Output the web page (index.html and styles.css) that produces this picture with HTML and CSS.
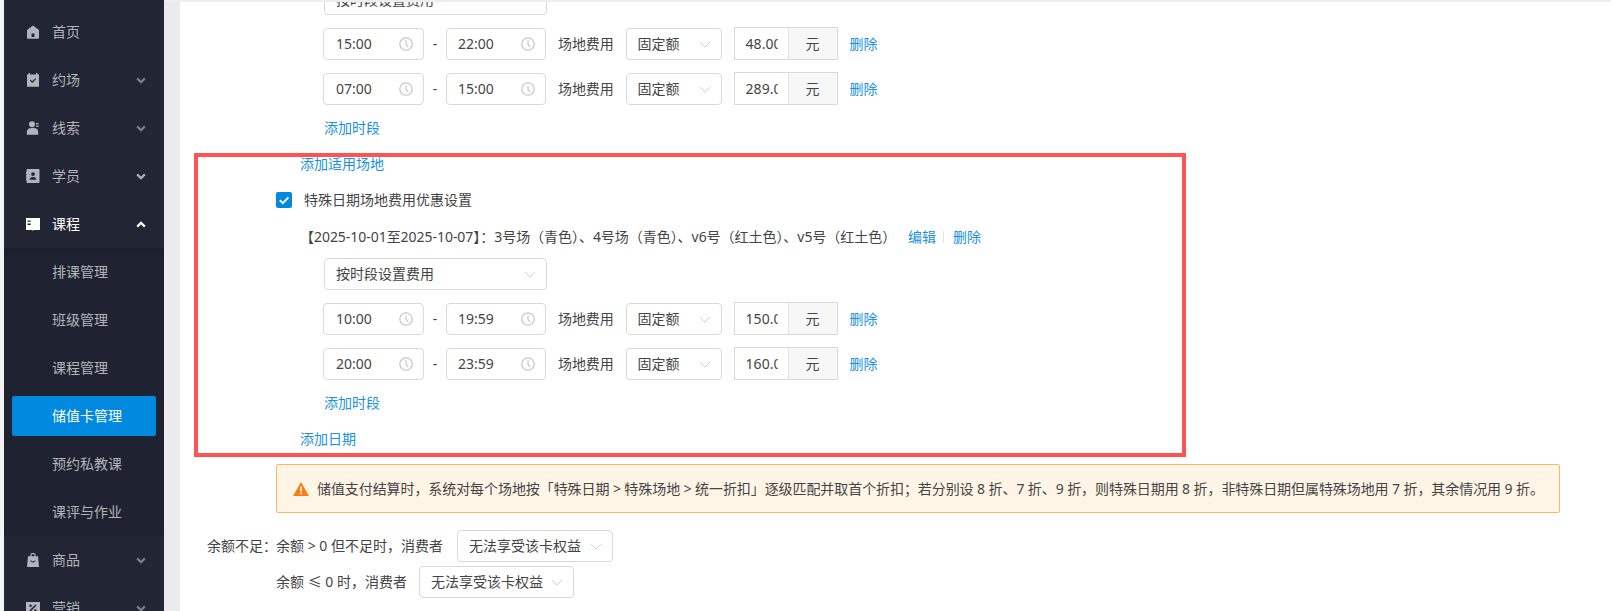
FILE: index.html
```html
<!DOCTYPE html>
<html lang="zh-CN">
<head>
<meta charset="utf-8">
<title>储值卡管理</title>
<link rel="stylesheet" href="styles.css">
</head>
<body>
<svg class="defs" width="0" height="0" aria-hidden="true">
  <defs>
    <symbol id="clock" viewBox="0 0 14 14"><circle cx="7" cy="7" r="6.2" fill="none" stroke="currentColor" stroke-width="1.3"/><path d="M7 3.200V7.400L9.200 9.800" fill="none" stroke="currentColor" stroke-width="1.200"/></symbol>
    <symbol id="down" viewBox="0 0 14 8"><path d="M1 1L7 7L13 1" fill="none" stroke="currentColor" stroke-width="1"/></symbol>
    <symbol id="chev" viewBox="0 0 10 7"><path d="M1.200 1.400L5 5.200L8.800 1.400" fill="none" stroke="currentColor" stroke-width="2.200"/></symbol>
  </defs>
</svg>
<div class="app">
  <aside class="sidebar">
    <nav class="menu">
      <a class="item">
        <svg class="ico" viewBox="0 0 14 14"><path fill="currentColor" fill-rule="evenodd" d="M7 .6L13 5v8a.7.7 0 0 1-.7.7H1.700A.7.7 0 0 1 1 13V5zM5.600 8.500v3.500h2.800V8.500z"/></svg>
        <span class="label">首页</span>
      </a>
      <a class="item">
        <svg class="ico" viewBox="0 0 14 14"><path fill="currentColor" fill-rule="evenodd" d="M2.500 0h1.600v1.400h5.800V0h1.600v1.400h1.500v12.400H1V1.400h1.500zM3.900 7.600L6.200 9.900 10.200 6 9.300 5.200 6.200 8.200 4.800 6.800z"/></svg>
        <span class="label">约场</span>
        <svg class="chev dim"><use href="#chev"/></svg>
      </a>
      <a class="item">
        <svg class="ico" viewBox="0 0 14 14"><circle cx="6" cy="3.300" r="3" fill="currentColor"/><path fill="currentColor" d="M.8 11c0-2.600 2-3.900 5.200-3.900h2c2.600 0 4.200 1.300 4.200 3.900v2.800H.8z"/><rect x="10" y="2" width="2.600" height="1.300" fill="currentColor"/><rect x="10" y="4.500" width="2.600" height="1.300" fill="currentColor"/></svg>
        <span class="label">线索</span>
        <svg class="chev dim"><use href="#chev"/></svg>
      </a>
      <a class="item">
        <svg class="ico" viewBox="0 0 14 14"><path fill="currentColor" fill-rule="evenodd" d="M1.500 0h11a1 1 0 0 1 1 1v12a1 1 0 0 1-1 1h-11a1 1 0 0 1-1-1v-2H0V9.500h.5v-1H0V6h.5V5H0V3h.5V1a1 1 0 0 1 1-1zM7 3.200a1.900 1.900 0 1 0 0 3.800 1.900 1.900 0 0 0 0-3.800zM3.600 10.800h6.800c0-1.800-1.400-2.900-3.400-2.900s-3.400 1.100-3.400 2.900z"/></svg>
        <span class="label">学员</span>
        <svg class="chev"><use href="#chev"/></svg>
      </a>
      <a class="item open">
        <svg class="ico" viewBox="0 0 14 14"><path fill="currentColor" fill-rule="evenodd" d="M0 1h14v12H8l-1 .7L6 13H0zM1.500 3.500v1.300h3.200V3.500zM1.500 6.600v1.300h3.200V6.600z"/></svg>
        <span class="label">课程</span>
        <svg class="chev up"><use href="#chev"/></svg>
      </a>
      <div class="submenu">
        <a class="sub">排课管理</a>
        <a class="sub">班级管理</a>
        <a class="sub">课程管理</a>
        <a class="sub active">储值卡管理</a>
        <a class="sub">预约私教课</a>
        <a class="sub">课评与作业</a>
      </div>
      <a class="item">
        <svg class="ico" viewBox="0 0 14 14"><path fill="currentColor" fill-rule="evenodd" d="M4.300 3.200V2.600a2.700 2.700 0 0 1 5.400 0v.6H12l1 10.800H1L2 3.200zM5.500 3.200h3V2.600a1.500 1.500 0 0 0-3 0zM4.300 7.800c.5 2.100 4.900 2.100 5.400 0l-1-.2c-.5 1.200-2.900 1.200-3.400 0z"/></svg>
        <span class="label">商品</span>
        <svg class="chev dim"><use href="#chev"/></svg>
      </a>
      <a class="item">
        <svg class="ico" viewBox="0 0 14 14"><path fill="currentColor" fill-rule="evenodd" d="M0 1h14v12H0zM9.400 3.400L3.400 9.500l1.100 1.100 6-6.100zM4.600 3.500a1.200 1.200 0 1 0 0 2.400 1.200 1.200 0 0 0 0-2.400zM9.400 8.200a1.200 1.200 0 1 0 0 2.400 1.200 1.200 0 0 0 0-2.400z"/></svg>
        <span class="label">营销</span>
        <svg class="chev dim"><use href="#chev"/></svg>
      </a>
    </nav>
  </aside>
  <div class="gutter"></div>
  <main class="main">
    <div class="highlight"></div>
    <div class="content">
      <div class="block">
        <div class="select wide clipped"><span>按时段设置费用</span><svg class="caret"><use href="#down"/></svg></div>
        <div class="row">
          <div class="time"><span>15:00</span><svg class="clock"><use href="#clock"/></svg></div>
          <span class="dash">-</span>
          <div class="time end"><span>22:00</span><svg class="clock"><use href="#clock"/></svg></div>
          <span class="fee">场地费用</span>
          <div class="select fixed"><span>固定额</span><svg class="caret"><use href="#down"/></svg></div>
          <div class="group"><span class="val">48.00</span><span class="unit">元</span></div>
          <a class="link del">删除</a>
        </div>
        <div class="row">
          <div class="time"><span>07:00</span><svg class="clock"><use href="#clock"/></svg></div>
          <span class="dash">-</span>
          <div class="time end"><span>15:00</span><svg class="clock"><use href="#clock"/></svg></div>
          <span class="fee">场地费用</span>
          <div class="select fixed"><span>固定额</span><svg class="caret"><use href="#down"/></svg></div>
          <div class="group"><span class="val">289.00</span><span class="unit">元</span></div>
          <a class="link del">删除</a>
        </div>
        <a class="link add-period">添加时段</a>
      </div>
      <a class="link add-outer">添加适用场地</a>

      <label class="check-row">
        <span class="checkbox"><svg viewBox="0 0 16 16"><path d="M3.800 8.200L6.900 11.200 12.400 5.400" fill="none" stroke="#fff" stroke-width="2"/></svg></span>
        <span>特殊日期场地费用优惠设置</span>
      </label>
      <div class="date-line">
        <span class="date-text">【2025-10-01至2025-10-07】：3号场（青色）、4号场（青色）、v6号（红土色）、v5号（红土色）</span>
        <a class="link">编辑</a>
        <span class="sep"></span>
        <a class="link">删除</a>
      </div>
      <div class="block">
        <div class="select wide"><span>按时段设置费用</span><svg class="caret"><use href="#down"/></svg></div>
        <div class="row">
          <div class="time"><span>10:00</span><svg class="clock"><use href="#clock"/></svg></div>
          <span class="dash">-</span>
          <div class="time end"><span>19:59</span><svg class="clock"><use href="#clock"/></svg></div>
          <span class="fee">场地费用</span>
          <div class="select fixed"><span>固定额</span><svg class="caret"><use href="#down"/></svg></div>
          <div class="group"><span class="val">150.00</span><span class="unit">元</span></div>
          <a class="link del">删除</a>
        </div>
        <div class="row">
          <div class="time"><span>20:00</span><svg class="clock"><use href="#clock"/></svg></div>
          <span class="dash">-</span>
          <div class="time end"><span>23:59</span><svg class="clock"><use href="#clock"/></svg></div>
          <span class="fee">场地费用</span>
          <div class="select fixed"><span>固定额</span><svg class="caret"><use href="#down"/></svg></div>
          <div class="group"><span class="val">160.00</span><span class="unit">元</span></div>
          <a class="link del">删除</a>
        </div>
        <a class="link add-period">添加时段</a>
      </div>
      <a class="link add-outer">添加日期</a>

      <div class="alert">
        <svg class="warn" viewBox="0 0 16 14"><path fill="#fa7d14" fill-rule="evenodd" d="M8 0L16 14H0zM7.100 4.600V9.500H8.900V4.600zM7.100 10.500V12.200H8.900V10.500z"/></svg>
        <span>储值支付结算时，系统对每个场地按「特殊日期 &gt; 特殊场地 &gt; 统一折扣」逐级匹配并取首个折扣；若分别设 8 折、7 折、9 折，则特殊日期用 8 折，非特殊日期但属特殊场地用 7 折，其余情况用 9 折。</span>
      </div>

      <div class="balance one">
        <span class="balance-title">余额不足：</span>
        <span class="balance-text">余额 &gt; 0 但不足时，消费者</span>
        <div class="select rights"><span>无法享受该卡权益</span><svg class="caret"><use href="#down"/></svg></div>
      </div>
      <div class="balance two">
        <span class="balance-text">余额 ≤ 0 时，消费者</span>
        <div class="select rights"><span>无法享受该卡权益</span><svg class="caret"><use href="#down"/></svg></div>
      </div>
    </div>
  </main>
</div>
</body>
</html>
```
FILE: styles.css
```css
* { box-sizing: border-box; }
html, body { margin: 0; height: 100%; overflow: hidden; background: #fff; }
body {
  font-family: "Noto Sans", "Noto Sans CJK SC", sans-serif;
  font-size: 14px;
  line-height: 20px;
  color: #444;
}
.defs { position: absolute; }
.app { display: flex; height: 611px; }

.sidebar {
  flex: 0 0 164px;
  border-left: 4px solid #f3f3f3;
  background: #212534;
  overflow: hidden;
}
.menu { display: flex; flex-direction: column; padding-top: 8px; }
.item {
  flex: 0 0 48px;
  display: flex;
  align-items: center;
  padding-left: 22px;
  color: #b3b4ba;
}
.ico { width: 14px; height: 14px; flex: none; }
.label { margin-left: 12px; flex: 1; }
.chev { width: 10px; height: 7px; margin-right: 18px; color: #b3b4ba; }
.chev.dim { color: #7d808c; }
.chev.up { transform: rotate(180deg); color: #fff; }
.item.open { color: #fff; }
.submenu {
  display: flex;
  flex-direction: column;
  background: #1f2331;
  box-shadow: inset 0 3px 4px rgba(0,0,0,.12);
}
.sub {
  height: 40px;
  margin: 4px 8px;
  padding-left: 40px;
  line-height: 40px;
  border-radius: 2px;
  color: #b3b4ba;
}
.sub.active { background: #0089de; color: #fff; }

.gutter { flex: 0 0 16px; background: #ebebeb; }
.main {
  flex: 1;
  position: relative;
  overflow: hidden;
  border-top: 2px solid #eee;
  margin-left: -16px;
}
.content { margin-top: -18px; padding-left: 16px; }
.highlight {
  position: absolute;
  left: 30px;
  top: 151px;
  width: 992px;
  height: 304px;
  border: 4px solid #ff5252;
  pointer-events: none;
}

.block { margin-left: 144px; display: flex; flex-direction: column; align-items: flex-start; }
.row { display: flex; align-items: flex-end; margin: 12px 0 0 -1px; height: 33px; }

.select, .time {
  display: flex;
  align-items: center;
  justify-content: space-between;
  height: 32px;
  padding: 0 10px 0 11px;
  border: 1px solid #d9d9d9;
  border-radius: 4px;
  background: #fff;
}
.select.wide { width: 223px; }
.select.clipped { height: 31px; }
.select.fixed { width: 96px; margin-left: 12px; }
.select.rights { width: 155px; }
.time { width: 101px; padding: 0 10px 0 12px; }
.time.end { width: 100px; padding-left: 11px; }
.clock { width: 14px; height: 14px; color: #c8c8c8; }
.caret { width: 12px; height: 7px; color: #c8c8c8; }
.dash { width: 22px; text-align: center; line-height: 32px; }
.fee { margin-left: 12px; line-height: 32px; letter-spacing: -.1px; }
.group {
  display: flex;
  width: 104px;
  height: 33px;
  margin-left: 12px;
  border: 1px solid #d9d9d9;
}
.val {
  width: 53px;
  padding-left: 11px;
  overflow: hidden;
  white-space: nowrap;
  line-height: 31px;
  clip-path: inset(0 10px 0 0);
}
.unit {
  flex: 1;
  text-align: center;
  line-height: 31px;
  background: #f7f7f7;
  border-left: 1px solid #e4e4e4;
}
.link { color: #1a92e0; white-space: nowrap; }
.del { margin-left: 12px; line-height: 32px; }
.add-period { margin-top: 13px; }
.add-outer { display: block; margin-left: 120px; margin-top: 16px; }

.check-row { display: flex; align-items: center; margin: 16px 0 0 96px; gap: 12px; }
.checkbox { width: 16px; height: 16px; background: #0089de; border-radius: 2px; display: block; }
.checkbox svg { display: block; width: 16px; height: 16px; }
.date-line { display: flex; align-items: center; margin: 17px 0 0 120px; }
.date-line + .block { margin-top: 11px; }
.date-text { width: 608px; white-space: nowrap; letter-spacing: -.04px; }
.sep { width: 1px; height: 12px; background: #e4e4e4; margin: 0 9px 0 7px; }

.alert {
  display: flex;
  align-items: center;
  height: 49px;
  margin: 15px 0 0 96px;
  width: 1284px;
  padding-left: 16px;
  gap: 8px;
  background: #fff5e6;
  border: 1px solid #ffb766;
  border-radius: 2px;
  white-space: nowrap;
  letter-spacing: -.08px;
}
.warn { width: 16px; height: 14px; flex: none; }

.balance { display: flex; align-items: center; white-space: nowrap; }
.balance.one { margin: 17px 0 0 27px; }
.balance.two { margin: 4px 0 0 96px; }
.balance-title { width: 69px; }
.balance-text + .select { margin-left: 12px; }
.balance.one .select { margin-left: 14px; width: 156px; }
```
